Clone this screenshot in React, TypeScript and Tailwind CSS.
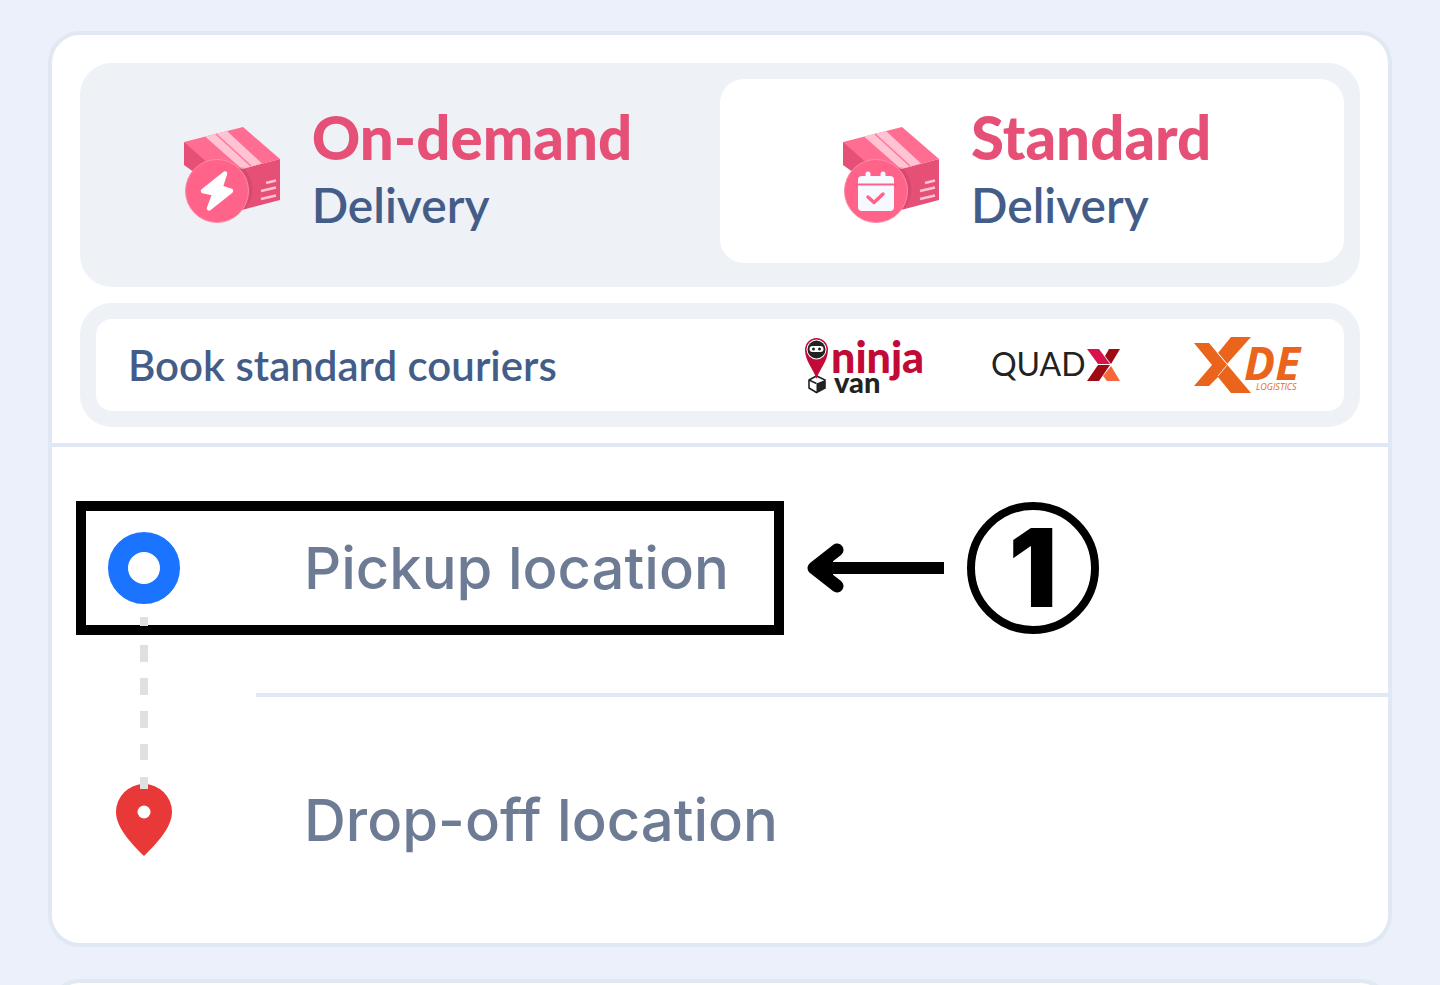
import type { ReactNode } from "react";

function Parcel({ children }: { children: ReactNode }) {
  return (
    <svg className="mt-3 h-24 w-24 shrink-0" viewBox="0 0 96 96" fill="none" aria-hidden="true">
      <path d="M0 15L58 42L61 82L0 38Z" fill="#e64f76" />
      <path d="M58 42L96 32V73L58 83Z" fill="#e64f76" />
      <path d="M0 15L59 0L96 32L58 42L26 38Z" fill="#ff6e92" />
      <path d="M21 9.5L43 4L78 36.5L58 42Z" fill="#ffc3d3" />
      <path d="M32 7L67 39" stroke="#ff7899" strokeWidth="1.6" />
      <path d="M59 40C70 52 72 68 61 82L48 82V42Z" fill="#a93355" opacity=".22" />
      <path d="M82 56L92 53.5M77 64L92 60.5M77 72L92 68.5" stroke="#ffc3d3" strokeWidth="2.8" />
      <circle cx="33" cy="64" r="31.5" fill="#ff6389" stroke="#ff8ba8" />
      {children}
    </svg>
  );
}

function BoltParcel() {
  return (
    <Parcel>
      <path
        d="M41 46.5L19 64L30.5 66.5L25 81.5L47 64L36.5 60.5Z"
        fill="#fff"
        stroke="#fff"
        strokeWidth="4.5"
        strokeLinejoin="round"
      />
    </Parcel>
  );
}

function CalendarParcel() {
  return (
    <Parcel>
      <path d="M25 47V53M40 47V53" stroke="#f6f9ff" strokeWidth="5" strokeLinecap="round" />
      <rect x="15" y="49" width="36" height="35" rx="4" fill="#f6f9ff" />
      <path d="M15 57.5H51" stroke="#ff6389" strokeWidth="2" />
      <path
        d="M25 70L31 75.5L40 67"
        stroke="#ff6389"
        strokeWidth="3.5"
        strokeLinecap="round"
        strokeLinejoin="round"
      />
    </Parcel>
  );
}

function NinjaVanLogo() {
  return (
    <svg className="h-[72px] w-[120px] overflow-visible" viewBox="0 -4 120 72" role="img" aria-label="ninja van">
      <path d="M5 47L12.5 43L21 47V55L12.5 59.5L5 55Z" fill="#fff" stroke="#222" strokeWidth="1.6" />
      <path d="M12.5 50.5L21 47V55L12.5 59.5Z" fill="#222" />
      <path d="M5 47L12.5 50.5" stroke="#222" strokeWidth="1.6" />
      <path d="M12.5 46C10 37 1 28 1 17A11.5 12 0 0 1 24 17C24 28 15 37 12.5 46Z" fill="#c20a38" />
      <circle cx="12.5" cy="16.5" r="10" fill="#fff" />
      <circle cx="12.5" cy="16.5" r="9" fill="#222" />
      <rect x="5.5" y="13" width="14" height="6" rx="3" fill="#fff" />
      <circle cx="9.5" cy="16" r="1.5" fill="#222" />
      <circle cx="15.5" cy="16" r="1.5" fill="#222" />
      <text x="27" y="40" fill="#c20a38" fontFamily="Lato, sans-serif" fontWeight="900" fontSize="43">
        ninja
      </text>
      <text x="30" y="60" fill="#222" fontFamily="Lato, sans-serif" fontWeight="900" fontSize="29">
        van
      </text>
    </svg>
  );
}

function QuadxLogo() {
  return (
    <svg className="h-16 w-[134px]" viewBox="0 0 134 64" role="img" aria-label="QUADX">
      <text x="-1" y="43" fill="#222" fontFamily="Lato, sans-serif" fontSize="32">
        QUAD
      </text>
      <path d="M95 16H107L118 31H106Z" fill="#d8124c" />
      <path d="M117 16H128L119 31L113 23Z" fill="#9f0b12" />
      <path d="M106 32H118L107 48H95Z" fill="#9f0b12" />
      <path d="M119 33L128 48H115L111 43Z" fill="#f7673b" />
    </svg>
  );
}

function XdeLogo() {
  return (
    <svg className="h-16 w-[108px] overflow-visible" viewBox="0 0 108 64" role="img" aria-label="XDE Logistics">
      <path d="M0 10H15L33 31.5L57 60H37L24 44L15 53H0L18 32Z" fill="#ea651b" />
      <path d="M37 4H57L33 31L24 20Z" fill="#ea651b" />
      <path d="M23 19L33.5 31.5L24 43" fill="none" stroke="#fff" strokeWidth=".8" />
      <text
        x="50"
        y="47"
        fill="#ea651b"
        fontFamily="Open Sans, sans-serif"
        fontWeight="700"
        fontStyle="italic"
        fontSize="46"
      >
        DE
      </text>
      <text x="62" y="57" fill="#ea651b" fontFamily="Open Sans, sans-serif" fontStyle="italic" fontSize="9">
        LOGISTICS
      </text>
    </svg>
  );
}

const services = [
  { title: "On-demand", icon: <BoltParcel />, selected: false },
  { title: "Standard", icon: <CalendarParcel />, selected: true },
];

export default function App() {
  return (
    <main className="h-screen overflow-hidden bg-[#ebf0fa] px-12 pt-[31px] font-['Lato',sans-serif]">
      <section className="rounded-[32px] border-4 border-[#e0e8f3] bg-white">
        <div className="flex flex-col gap-4 px-7 pt-7 pb-4">
          {/* Service switch */}
          <div className="grid grid-cols-2 rounded-[32px] bg-[#eef1f6] px-4 pt-4 pb-6">
            {services.map((service) => (
              <button
                key={service.title}
                type="button"
                aria-pressed={service.selected}
                className={`flex h-[184px] items-center justify-center gap-8 rounded-3xl pb-1 text-left ${
                  service.selected ? "bg-white" : ""
                }`}
              >
                {service.icon}
                <span className="flex min-w-[250px] flex-col">
                  <span className="text-[60px] leading-[72px] font-black text-[#e64f76]">{service.title}</span>
                  <span className="text-[48px] leading-[64px] font-semibold text-[#445d88]">Delivery</span>
                </span>
              </button>
            ))}
          </div>

          {/* Couriers */}
          <div className="rounded-[32px] bg-[#eef1f6] p-4">
            <div className="flex h-[92px] items-center justify-between rounded-2xl bg-white pr-[42px] pl-8">
              <h2 className="text-[42px] leading-[48px] font-semibold text-[#445d88]">Book standard couriers</h2>
              <div className="flex items-center gap-[68px]">
                <NinjaVanLogo />
                <QuadxLogo />
                <XdeLogo />
              </div>
            </div>
          </div>
        </div>

        {/* Route */}
        <div className="relative border-t-4 border-[#e0e8f3] font-['Inter',sans-serif] text-[58px] font-medium text-[#6d7b94]">
          <div className="flex h-[246px] items-center pb-1 pl-6">
            <button
              type="button"
              className="flex h-[134px] w-[708px] items-center border-[10px] border-black pl-[22px] text-left"
            >
              <span className="h-[72px] w-[72px] shrink-0 rounded-full border-[20px] border-[#1b74ff]" />
              <span className="pl-[124px] whitespace-nowrap">Pickup location</span>
            </button>
            <svg className="ml-[23px] h-[50px] w-[137px]" viewBox="0 0 137 50" fill="none" aria-hidden="true">
              <path d="M8 25H137" stroke="#000" strokeWidth="12" />
              <path
                d="M30 7L7 25L30 43"
                stroke="#000"
                strokeWidth="13"
                strokeLinecap="round"
                strokeLinejoin="round"
              />
              <path d="M10 25L26 14V36Z" fill="#000" />
            </svg>
            <span className="ml-[23px] flex h-[132px] w-[132px] items-center justify-center rounded-full border-8 border-black text-[108px] leading-none font-black text-black">
              1
            </span>
          </div>
          <div className="ml-[204px] h-1 bg-[#e0e8f3]" />
          <button type="button" className="flex h-[246px] w-full items-center pl-16 text-left">
            <svg className="h-[72px] w-14 shrink-0" viewBox="0 0 56 72" aria-hidden="true">
              <path d="M28 72C19 63 0 45 0 28A28 28 0 0 1 56 28C56 45 37 63 28 72Z" fill="#e93838" />
              <circle cx="28" cy="28" r="6.5" fill="#fff" />
            </svg>
            <span className="pl-[132px]">Drop-off location</span>
          </button>

          {/* Dashed connector runs from the pickup dot onto the pin */}
          <svg className="absolute top-[170px] left-[88px] h-[172px] w-2" viewBox="0 0 8 172" aria-hidden="true">
            <path
              d="M0 0H8V9H0ZM0 28H8V45H0ZM0 61H8V78H0ZM0 94H8V111H0ZM0 127H8V143H0ZM0 160H8V172H0Z"
              fill="#e0e0e0"
            />
          </svg>
        </div>
      </section>

      <section className="mt-8 h-40 rounded-[32px] border-4 border-[#e0e8f3] bg-white" />
    </main>
  );
}
